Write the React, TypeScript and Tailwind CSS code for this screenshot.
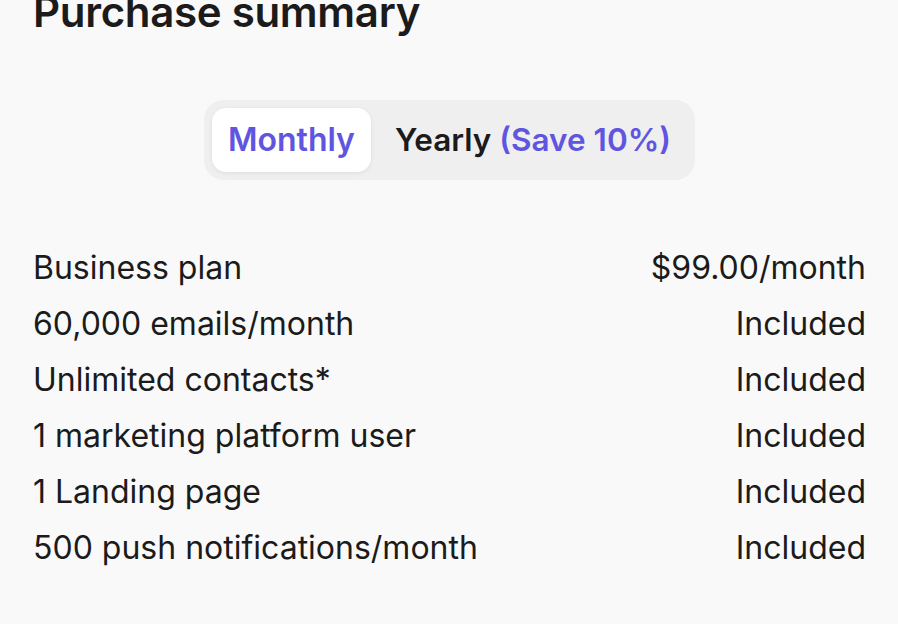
const rows: [string, string][] = [
  ['Business plan', '$99.00/month'],
  ['60,000 emails/month', 'Included'],
  ['Unlimited contacts*', 'Included'],
  ['1 marketing platform user', 'Included'],
  ['1 Landing page', 'Included'],
  ['500 push notifications/month', 'Included'],
];

export default function App() {
  return (
    <div
      className="min-h-screen w-full bg-[#f9f9f9] text-[#1b1b1b] overflow-hidden"
      style={{ fontFamily: 'Inter, "Noto Sans", sans-serif' }}
    >
      <div className="pl-[33px] pr-[32px]">
        <h1 className="text-[42px] leading-[42px] font-semibold tracking-[-0.3px] -mt-[9px]">Purchase summary</h1>

        <div className="flex justify-center mt-[67px]">
          <div className="flex items-center bg-[#efefef] rounded-[20px] p-2 gap-6 pr-6">
            <button className="h-16 px-4 rounded-[14px] bg-white shadow-[0_1px_4px_rgba(0,0,0,0.08)] text-[32px] font-semibold text-[#5f55e0]">
              Monthly
            </button>
            <div className="text-[31.5px] font-semibold">
              Yearly <span className="text-[#5f55e0]">(Save 10%)</span>
            </div>
          </div>
        </div>

        <div className="mt-[60px] flex flex-col">
          {rows.map(([label, value]) => (
            <div key={label} className="flex justify-between items-center h-14 text-[32px]">
              <span>{label}</span>
              <span>{value}</span>
            </div>
          ))}
        </div>
      </div>
    </div>
  );
}
